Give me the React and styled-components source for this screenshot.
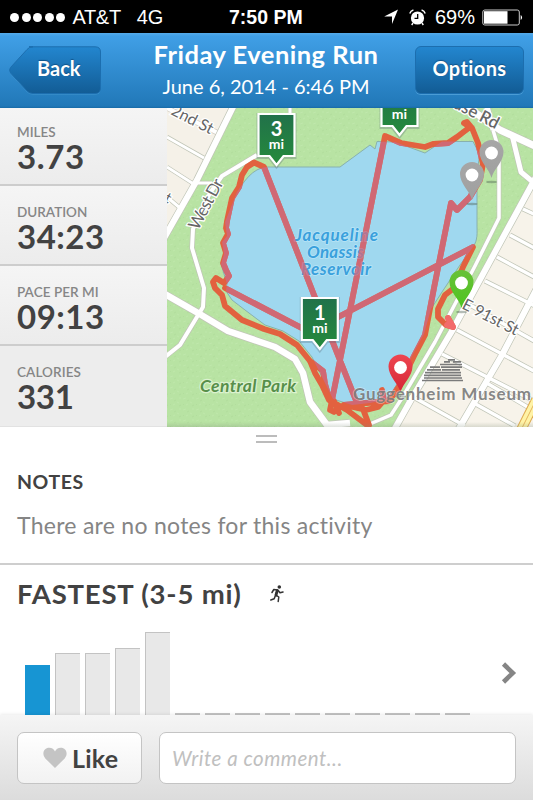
import React from "react";
import styled, { createGlobalStyle, css } from "styled-components";

const GlobalStyle = createGlobalStyle`
  *, *::before, *::after { box-sizing: border-box; }
  body { margin: 0; background: #fff; overflow: hidden; }
`;

const Screen = styled.main`
  width: 533px;
  height: 800px;
  display: flex;
  flex-direction: column;
  overflow: hidden;
  background: #fff;
  color: #424242;
  font-family: Lato, "Open Sans", sans-serif;
  font-variant-ligatures: none;
`;

const Line = styled.span`
  display: block;
  white-space: nowrap;
  letter-spacing: ${(p) => p.$track || 0}px;
`;

/* Status bar */
const StatusBar = styled.div`
  flex: none;
  height: 33px;
  display: grid;
  grid-template-columns: 229px 1fr 150px;
  align-items: center;
  background: #000;
  color: #fff;
  font: 20px/34px "Liberation Sans", Arial, sans-serif;
`;
const Carrier = styled.div`
  display: flex;
  align-items: center;
  padding-left: 10px;
`;
const Signal = styled.div`
  display: flex;
  gap: 2.6px;
  margin-right: 7px;
`;
const Dot = styled.i`
  width: 9px;
  height: 9px;
  border-radius: 50%;
  background: #fff;
`;
const Network = styled(Line)`
  margin-left: 16px;
`;
const Clock = styled(Line)`
  font-weight: 700;
  font-size: 19.5px;
`;
const StatusIcons = styled.div`
  display: flex;
  align-items: center;
  svg { display: block; flex: none; }
`;
const AlarmIcon = styled.svg`
  margin-left: 10px;
`;
const Percent = styled(Line)`
  margin: 0 7px 0 9px;
`;

/* Navigation bar */
const NavBar = styled.header`
  flex: none;
  height: 75px;
  display: flex;
  justify-content: space-between;
  padding: 13px 9px 0;
  color: #fff;
  background: linear-gradient(#55abea 0, #409fe6 3px, #2178b8 73px, #176aa7 75px);
`;
const navButton = css`
  height: 48px;
  padding: 0;
  border: 0;
  color: #fff;
  font: 700 20px/42px Lato, sans-serif;
  font-variant-ligatures: none;
  text-shadow: 0 -1px 1px rgba(0, 40, 80, 0.45);
`;
const BackButton = styled.button`
  ${navButton}
  position: relative;
  width: 93px;
  padding: 0 0 4px 28px;
  background: none;
  text-align: left;
  svg { position: absolute; left: 0; top: 0; }
  span { position: relative; }
`;
const OptionsButton = styled.button`
  ${navButton}
  width: 109px;
  margin-right: 0;
  padding-bottom: 4px;
  letter-spacing: 0.4px;
  border-radius: 6px;
  background: linear-gradient(#2386cf, #125c95);
  border: 1px solid #1c6eaf;
  box-shadow: 0 1px 0 rgba(110, 185, 235, 0.5);
`;
const Heading = styled.div`
  display: flex;
  flex-direction: column;
  align-items: center;
  margin-left: 15px;
`;
const Title = styled(Line)`
  margin-top: -8px;
  font-size: 25.5px;
  font-weight: 700;
  line-height: 32px;
`;
const Subtitle = styled(Line)`
  margin-top: 2px;
  font-size: 20px;
  line-height: 28px;
`;

/* Summary */
const Summary = styled.section`
  flex: none;
  display: grid;
  grid-template-columns: 167px 366px;
  height: 319px;
`;
const Stats = styled.div`
  display: grid;
  grid-template-rows: 78px 80px 80px 81px;
`;
const Stat = styled.div`
  padding: ${(p) => (p.$first ? 15 : 17)}px 0 0 17px;
  background: ${(p) => (p.$last ? "#ededed" : "linear-gradient(#f5f5f5, #ececec)")};
  border-bottom: ${(p) => (p.$last ? "1px solid #e2e2e2" : "2px solid #cdcdcd")};
`;
const StatLabel = styled(Line)`
  color: #868686;
  font-size: 13.5px;
  font-weight: 600;
  line-height: 18px;
`;
const StatValue = styled(Line)`
  font-size: 33px;
  font-weight: 700;
  line-height: 30px;
`;
const MapCanvas = styled.svg`
  display: block;
  overflow: hidden;
`;

/* Details */
const Handle = styled.div`
  flex: none;
  width: 21px;
  height: 8px;
  margin: 8px auto 0 256px;
  border: solid #bcbcbc;
  border-width: 2px 0;
`;
const Notes = styled.section`
  flex: none;
  height: 122px;
  padding: 26px 17px 0;
  border-bottom: 2px solid #cecece;
`;
const NotesTitle = styled(Line)`
  font-size: 19.5px;
  font-weight: 700;
  line-height: 26px;
`;
const NotesText = styled(Line)`
  margin-top: 14px;
  color: #858585;
  font-size: 23px;
  line-height: 32px;
`;
const Fastest = styled.section`
  flex: 1;
  min-height: 0;
  display: flex;
  flex-direction: column;
  justify-content: space-between;
`;
const FastestHeader = styled.div`
  display: flex;
  align-items: center;
  height: 36px;
  margin-top: 10px;
  padding-left: 17px;
  svg { margin: 1px 0 0 27px; }
`;
const FastestTitle = styled(Line)`
  width: 226px;
  font-size: 27.5px;
  font-weight: 700;
`;
const ChartRow = styled.div`
  display: flex;
  justify-content: space-between;
  align-items: flex-end;
  padding: 0 16px 0 25px;
  > svg { margin-bottom: 31px; }
`;
const Bars = styled.div`
  display: flex;
  align-items: flex-end;
  gap: 5px;
`;
const Bar = styled.div`
  width: 25px;
  height: ${(p) => p.$height}px;
  background: ${(p) => (p.$active ? "#1795d3" : "#e8e8e8")};
  border: solid #c3c3c3;
  border-width: ${(p) => (p.$active ? "0" : p.$height < 3 ? "2px 0 0" : "1.5px 0 0 1.5px")};
`;

/* Footer */
const Footer = styled.footer`
  flex: none;
  height: 85px;
  display: flex;
  gap: 17px;
  padding: 17px 17px 16px;
  background: linear-gradient(#f5f5f5, #dcdcdc);
  box-shadow: 0 -1px 3px rgba(0, 0, 0, 0.08);
`;
const LikeButton = styled.button`
  width: 125px;
  display: flex;
  align-items: center;
  padding: 0 0 0 25px;
  gap: 5px;
  border: 1.5px solid #c4c4c4;
  border-radius: 7px;
  background: linear-gradient(#fff, #f2f2f2);
  color: #424242;
  font: 700 25px/48px Lato, sans-serif;
  letter-spacing: 0.2px;
`;
const CommentBox = styled.input`
  flex: 1;
  min-width: 0;
  padding: 0 12px 1px;
  border: 1.5px solid #c4c4c4;
  border-radius: 7px;
  background: #fff;
  outline: 0;
  font: italic 20.5px Lato, sans-serif;
  font-variant-ligatures: none;
  letter-spacing: 0.5px;
  &::placeholder { color: #c0c0c0; opacity: 1; }
`;

const STATS = [
  ["MILES", "3.73", 0, 0.6],
  ["DURATION", "34:23", 0, 0.5],
  ["PACE PER MI", "09:13", 0.05, 0.5],
  ["CALORIES", "331", 0.1, -0.3],
];
const BARS = [50, 62, 62, 67, 83, 2, 2, 2, 2, 2, 2, 2, 2, 2, 2];

const LAKE =
  "M267 167 C252 168 244 182 237 192 L229 212 225 222 227 236 222 242 224 254 221 264 227 284 226 291 232 300 245 310 265 325 283 331 299 341 312 357 326 385 333 399 352 405 370 403 388 399 402 376 413 354 424 334 431 309 442 292 460 265 473 247 C478 240 477 233 477 225 V170 L480 155 473 141.5 H442 L425 153 395 142 377 141.5 375 149 370 145 355 156 340 167 Z";

const ROUTE = [
  "M319 337 L225 288 M319 327 L473 247 463 267 461 272 M454 288 L445 295 438 309 438 317 446 325 453 327 448 318",
  "M215 288 L222 295 225 306 242 320 264 329 280 334 297 345 310 361 315 373 322 385 329 400 347 410 367 425",
  "M215 288 L213 282 216 278 224 283 229 276 226 270 223 263 226 253 223 243 228 234 226 228 227 221 232 198 239 187 242 175 247 167 254 162.5 264 167 314 295 357 403",
  "M310 361 L323 371 325 384 330 401",
  "M339 406 L334 412 330 410 385 136 401 143 425 147 433 144 448 143 457 137 470 127 464 123 467 122 472 128 478 143 483 164 480 180 470 197 457 210 451 203 434 288 425 335 414 356 400 385 389 401 344 405 366 410 378 407 384 400 382 390",
  "M334 401 L339 413 M363 409 L369 425",
].join(" ");

const ROADS = [
  [6, "M235 103 L197 180 163 240"],
  [3, "M290 105 V118 M167 137 L204 158 M167 167 L192 183 212 183 M167 197 L180 208"],
  [4, "M257 155 L222 176 210 193 193 229 192 248 198 268 204 288 203 307 180 345 165 357"],
  [6.5, "M163 293 L198 313 228 331 275 347 295 359 303 373 310 402 327 425 350 423"],
  [7, "M463 104 L500 130 537 147"],
  [5, "M512 135 L521 172 533 182 M487 106 L493 130"],
  [3.5, "M493 130 L499 150 499 218 475 266 435 342 402 398 391 415 370 424"],
  [6, "M536 177 L495 252 452 331 412 398 394 430"],
  [6, "M537 288 L502 355 458 430"],
  [3.5, "M523 209 L536 215 M510 235 L536 249 M497 257 L536 278 M485 281 L535 306 M470 305 L536 342 M457 330 L536 372 M442 354 L536 402 M415 398 L465 426 M485 382 L536 412 M472 402 L515 426"],
];

function Flag({ x, y, label }) {
  return (
    <g transform={`translate(${x} ${y})`}>
      <path d="M-18 -53 H18 V-11 H7 L0 -2 L-7 -11 H-18 Z" transform="translate(0 1)" stroke="#567" strokeOpacity=".3" strokeWidth="4" fill="none" />
      <path d="M-18 -53 H18 V-11 H7 L0 -2 L-7 -11 H-18 Z" fill="url(#flag)" stroke="#fff" strokeWidth="2.2" />
      {label && <text y="-31.5" fontSize="20" fontWeight="700" fill="#fff" textAnchor="middle">{label}</text>}
      <text y="-18.5" fontSize="14" fontWeight="700" fill="#fff" textAnchor="middle">mi</text>
    </g>
  );
}

function Pin({ x, y, tone }) {
  return (
    <g transform={`translate(${x} ${y})`}>
      <ellipse cy="29" rx="5.5" ry="1.2" fill="#47594a" opacity=".4" />
      <path d="M0 25 C-2 16 -12 9 -12 -1 A12 12 0 0 1 12 -1 C12 9 2 16 0 25Z" fill={`url(#pin-${tone})`} />
      <circle r="6.4" fill="#fff" />
    </g>
  );
}

const PIN_TONES = [
  ["gray", "#a6a6a6", "#a0a0a0"],
  ["green", "#68c138", "#4dc41f"],
  ["red", "#ee4650", "#d52636"],
];

function RouteMap() {
  return (
    <MapCanvas width="366" height="319" viewBox="167 108 366 319" fontFamily="Lato, sans-serif">
      <defs>
        <linearGradient id="flag" x2="0" y2="1">
          <stop stopColor="#21714a" /><stop offset="1" stopColor="#258b3c" />
        </linearGradient>
        {PIN_TONES.map(([id, top, bottom]) => (
          <linearGradient key={id} id={`pin-${id}`} x2="0" y2="1">
            <stop stopColor={top} /><stop offset="1" stopColor={bottom} />
          </linearGradient>
        ))}
        <linearGradient id="base" x2="0" y2="1">
          <stop stopColor="#7c8b78" stopOpacity="0" /><stop offset="1" stopColor="#7c8b78" stopOpacity=".25" />
        </linearGradient>
        <pattern id="grass" width="13" height="11" patternUnits="userSpaceOnUse">
          <rect width="13" height="11" fill="#b8e3a3" />
          <path d="M1 3l3-1M8 6l2 1M4 9l2-1M10 2l2 0" stroke="#bfe7ab" strokeWidth="1" />
          <path d="M5 5l2-1M1 8l1 1M10 10l2-1" stroke="#b2dd9d" strokeWidth="1" />
        </pattern>
        <clipPath id="lake"><path d={LAKE} /></clipPath>
      </defs>

      <rect x="167" y="108" width="366" height="319" fill="url(#grass)" />
      <path d="M167 108 H233 L197 180 167 233Z" fill="#f5f1e8" />
      <path d="M167 108 L218 133" stroke="#d3cfc7" strokeWidth="5.5" />
      <path d="M167 108 L218 133" stroke="#fff" strokeWidth="4" />
      <path d="M536 177 L495 252 452 331 412 398 394 430 H536Z" fill="#f7f3ea" />
      <path d={LAKE} fill="#9fd8ef" stroke="#88b1ae" strokeWidth="1" />

      <g fill="none" strokeLinejoin="round">
        {ROADS.map(([w, d]) => <path key={d} d={d} stroke="#c0c5b7" strokeWidth={w + 1.4} />)}
        {ROADS.map(([w, d]) => <path key={d} d={d} stroke="#fff" strokeWidth={w} />)}
        <path d="M536 400 L521 430" stroke="#dda84e" strokeWidth="10" />
        <path d="M536 400 L521 430" stroke="#fff3a6" strokeWidth="8" />
        <path d="M536 400 L521 430" stroke="#e3b45e" strokeWidth="1" />
      </g>

      <g fontSize="16" fill="#666" stroke="#fff" strokeWidth="2.5" paintOrder="stroke">
        <text transform="translate(170 114) rotate(27)" textLength="45">2nd St</text>
        <text transform="translate(198 231) rotate(-62)" fontSize="17" textLength="55">West Dr</text>
        <text transform="translate(452 107) rotate(27)" fontSize="17" fontWeight="600" textLength="49">use Rd</text>
        <text transform="translate(461 308) rotate(27)" textLength="61">E 91st St</text>
        <text transform="translate(167 203) rotate(27)" fontSize="15" x="-4">t</text>
      </g>
      <text x="200" y="392" fontSize="17.5" fontWeight="700" fontStyle="italic" textLength="96" fill="#578f4a" stroke="#dcf2d0" strokeWidth="2.5" paintOrder="stroke">Central Park</text>

      <g fill="none" strokeWidth="5.8" strokeLinejoin="round" strokeLinecap="round">
        <path d={ROUTE} stroke="#e2613f" />
        <path d="M447 325 L453 327 448 318" stroke="#f26b6b" />
      </g>
      <g fontSize="17" fontWeight="700" fontStyle="italic" fill="#3aa0dc" stroke="#b9e5f7" strokeWidth="1.6" paintOrder="stroke">
        <text x="295" y="241" textLength="83">Jacqueline</text>
        <text x="307" y="258" textLength="57">Onassis</text>
        <text x="301" y="275" textLength="70">Reservoir</text>
      </g>
      <g clipPath="url(#lake)">
        <path d={ROUTE} fill="none" stroke="#cc6a80" strokeOpacity=".82" strokeWidth="5.8" strokeLinejoin="round" />
      </g>

      <g stroke="#7b7b7b" strokeWidth="1.7" fill="none">
        <path d="M422 380.5 H463 M424 378 H462 M424 375.3 H461 M425 372.6 H461 M427 369.9 H441 M442 369.9 H460 M430 367.2 H440 M441 367.2 H462 M440 364.5 H462 M444 361.8 H450 M453 361.8 H461 M448 359.8 H455" />
      </g>
      <Pin x={400.5} y={367.5} tone="red" />
      <text x="353" y="400" fontSize="17" fontWeight="700" textLength="178" fill="#777" fillOpacity=".9" stroke="#fff" strokeOpacity=".4" strokeWidth="1.5" paintOrder="stroke">Guggenheim Museum</text>

      <Flag x={276.5} y={167} label="3" />
      <Flag x={399.5} y={137} />
      <Flag x={319.8} y={351} label="1" />
      <Pin x={491.5} y={153} tone="gray" />
      <Pin x={472} y={175} tone="gray" />
      <Pin x={461.5} y={283} tone="green" />
      <rect x="167" y="422" width="366" height="5" fill="url(#base)" />
    </MapCanvas>
  );
}

const BACK_SHAPE =
  "M20 .8 H86 Q91.5 .8 91.5 6 V42 Q91.5 47.5 86 47.5 H24 Q20 47.5 18 45 L1.5 27 Q-.3 24 1.5 21.5 L18 3.5 Q20 .8 24 .8Z";

export default function App() {
  return (
    <Screen>
      <GlobalStyle />
      <StatusBar>
        <Carrier>
          <Signal>{[0, 1, 2, 3, 4].map((i) => <Dot key={i} />)}</Signal>
          <Line $track={-0.3}>AT&amp;T</Line>
          <Network $track={-0.3}>4G</Network>
        </Carrier>
        <Clock $track={0}>7:50 PM</Clock>
        <StatusIcons>
          <svg width="16" height="16" viewBox="0 0 16 16"><path d="M15 0.5 L9 15 V7.5 H1.2Z" fill="#fff" /></svg>
          <AlarmIcon width="17" height="17" viewBox="0 0 17 17">
            <circle cx="8.5" cy="9" r="6.6" fill="#fff" />
            <path d="M8.7 5 V9.3 H5.5" fill="none" stroke="#000" strokeWidth="1.3" />
            <path d="M.8 4.5 A5 5 0 0 1 4.4 1 M12.6 1 A5 5 0 0 1 16.2 4.5 M4 14 L2.7 16 M13 14 L14.3 16" fill="none" stroke="#fff" strokeWidth="1.4" />
          </AlarmIcon>
          <Percent>69%</Percent>
          <svg width="42" height="17" viewBox="0 0 42 17">
            <rect x=".8" y="1" width="36.5" height="15" rx="2" fill="none" stroke="#ccc" strokeWidth="1" />
            <rect x="2" y="2.2" width="23.5" height="12.5" fill="#fff" />
            <path d="M38.7 6 A3 3 0 0 1 38.7 11Z" fill="#fff" />
          </svg>
        </StatusIcons>
      </StatusBar>

      <NavBar>
        <BackButton>
          <svg width="93" height="49" viewBox="0 0 93 49">
            <defs>
              <linearGradient id="back" x2="0" y2="1">
                <stop stopColor="#2386cf" /><stop offset="1" stopColor="#125c95" />
              </linearGradient>
            </defs>
            <path d={BACK_SHAPE} transform="translate(0 1)" fill="#58a9dc" opacity=".55" />
            <path d={BACK_SHAPE} fill="url(#back)" stroke="#1c6eaf" />
          </svg>
          <Line>Back</Line>
        </BackButton>
        <Heading>
          <Title $track={0.5}>Friday Evening Run</Title>
          <Subtitle>June 6, 2014 - 6:46 PM</Subtitle>
        </Heading>
        <OptionsButton>Options</OptionsButton>
      </NavBar>

      <Summary>
        <Stats>
          {STATS.map(([label, value, lt, vt], i) => (
            <Stat key={label} $first={i === 0} $last={i === 3}>
              <StatLabel $track={lt}>{label}</StatLabel>
              <StatValue $track={vt}>{value}</StatValue>
            </Stat>
          ))}
        </Stats>
        <RouteMap />
      </Summary>

      <Handle />
      <Notes>
        <NotesTitle $track={0.6}>NOTES</NotesTitle>
        <NotesText $track={0.27}>There are no notes for this activity</NotesText>
      </Notes>

      <Fastest>
        <FastestHeader>
          <FastestTitle $track={0.8}>FASTEST (3-5 mi)</FastestTitle>
          <svg width="14" height="18" viewBox="0 0 14 18" fill="none" stroke="#333" strokeWidth="1.5" strokeLinecap="round" strokeLinejoin="round">
            <circle cx="9.3" cy="2" r="1.8" fill="#333" stroke="none" />
            <path d="M2 7.5 L3.8 4.5 L7.5 5 L5.6 9.8 L8.8 12 L8.2 16.5 M5.4 10.5 L4.2 13.8 L.8 15 M8.2 5.5 L10 7.8 L13 7" />
            <path d="M7.3 5.5 L6 10" strokeWidth="2.8" />
          </svg>
        </FastestHeader>
        <ChartRow>
          <Bars>{BARS.map((h, i) => <Bar key={i} $height={h} $active={i === 0} />)}</Bars>
          <svg width="16" height="22" viewBox="0 0 16 22"><path d="M2.5 2 L11.8 11 L2.5 20" fill="none" stroke="#858585" strokeWidth="4.6" /></svg>
        </ChartRow>
      </Fastest>

      <Footer>
        <LikeButton>
          <svg width="24" height="22" viewBox="0 0 24 22"><path d="M12 21 L2.3 11.4 C-1.6 7 .8 .8 6.3 .8 C9 .8 11 2.2 12 4.5 C13 2.2 15 .8 17.7 .8 C23.2 .8 25.6 7 21.7 11.4Z" fill="#c4c4c4" /></svg>
          Like
        </LikeButton>
        <CommentBox placeholder="Write a comment..." />
      </Footer>
    </Screen>
  );
}
